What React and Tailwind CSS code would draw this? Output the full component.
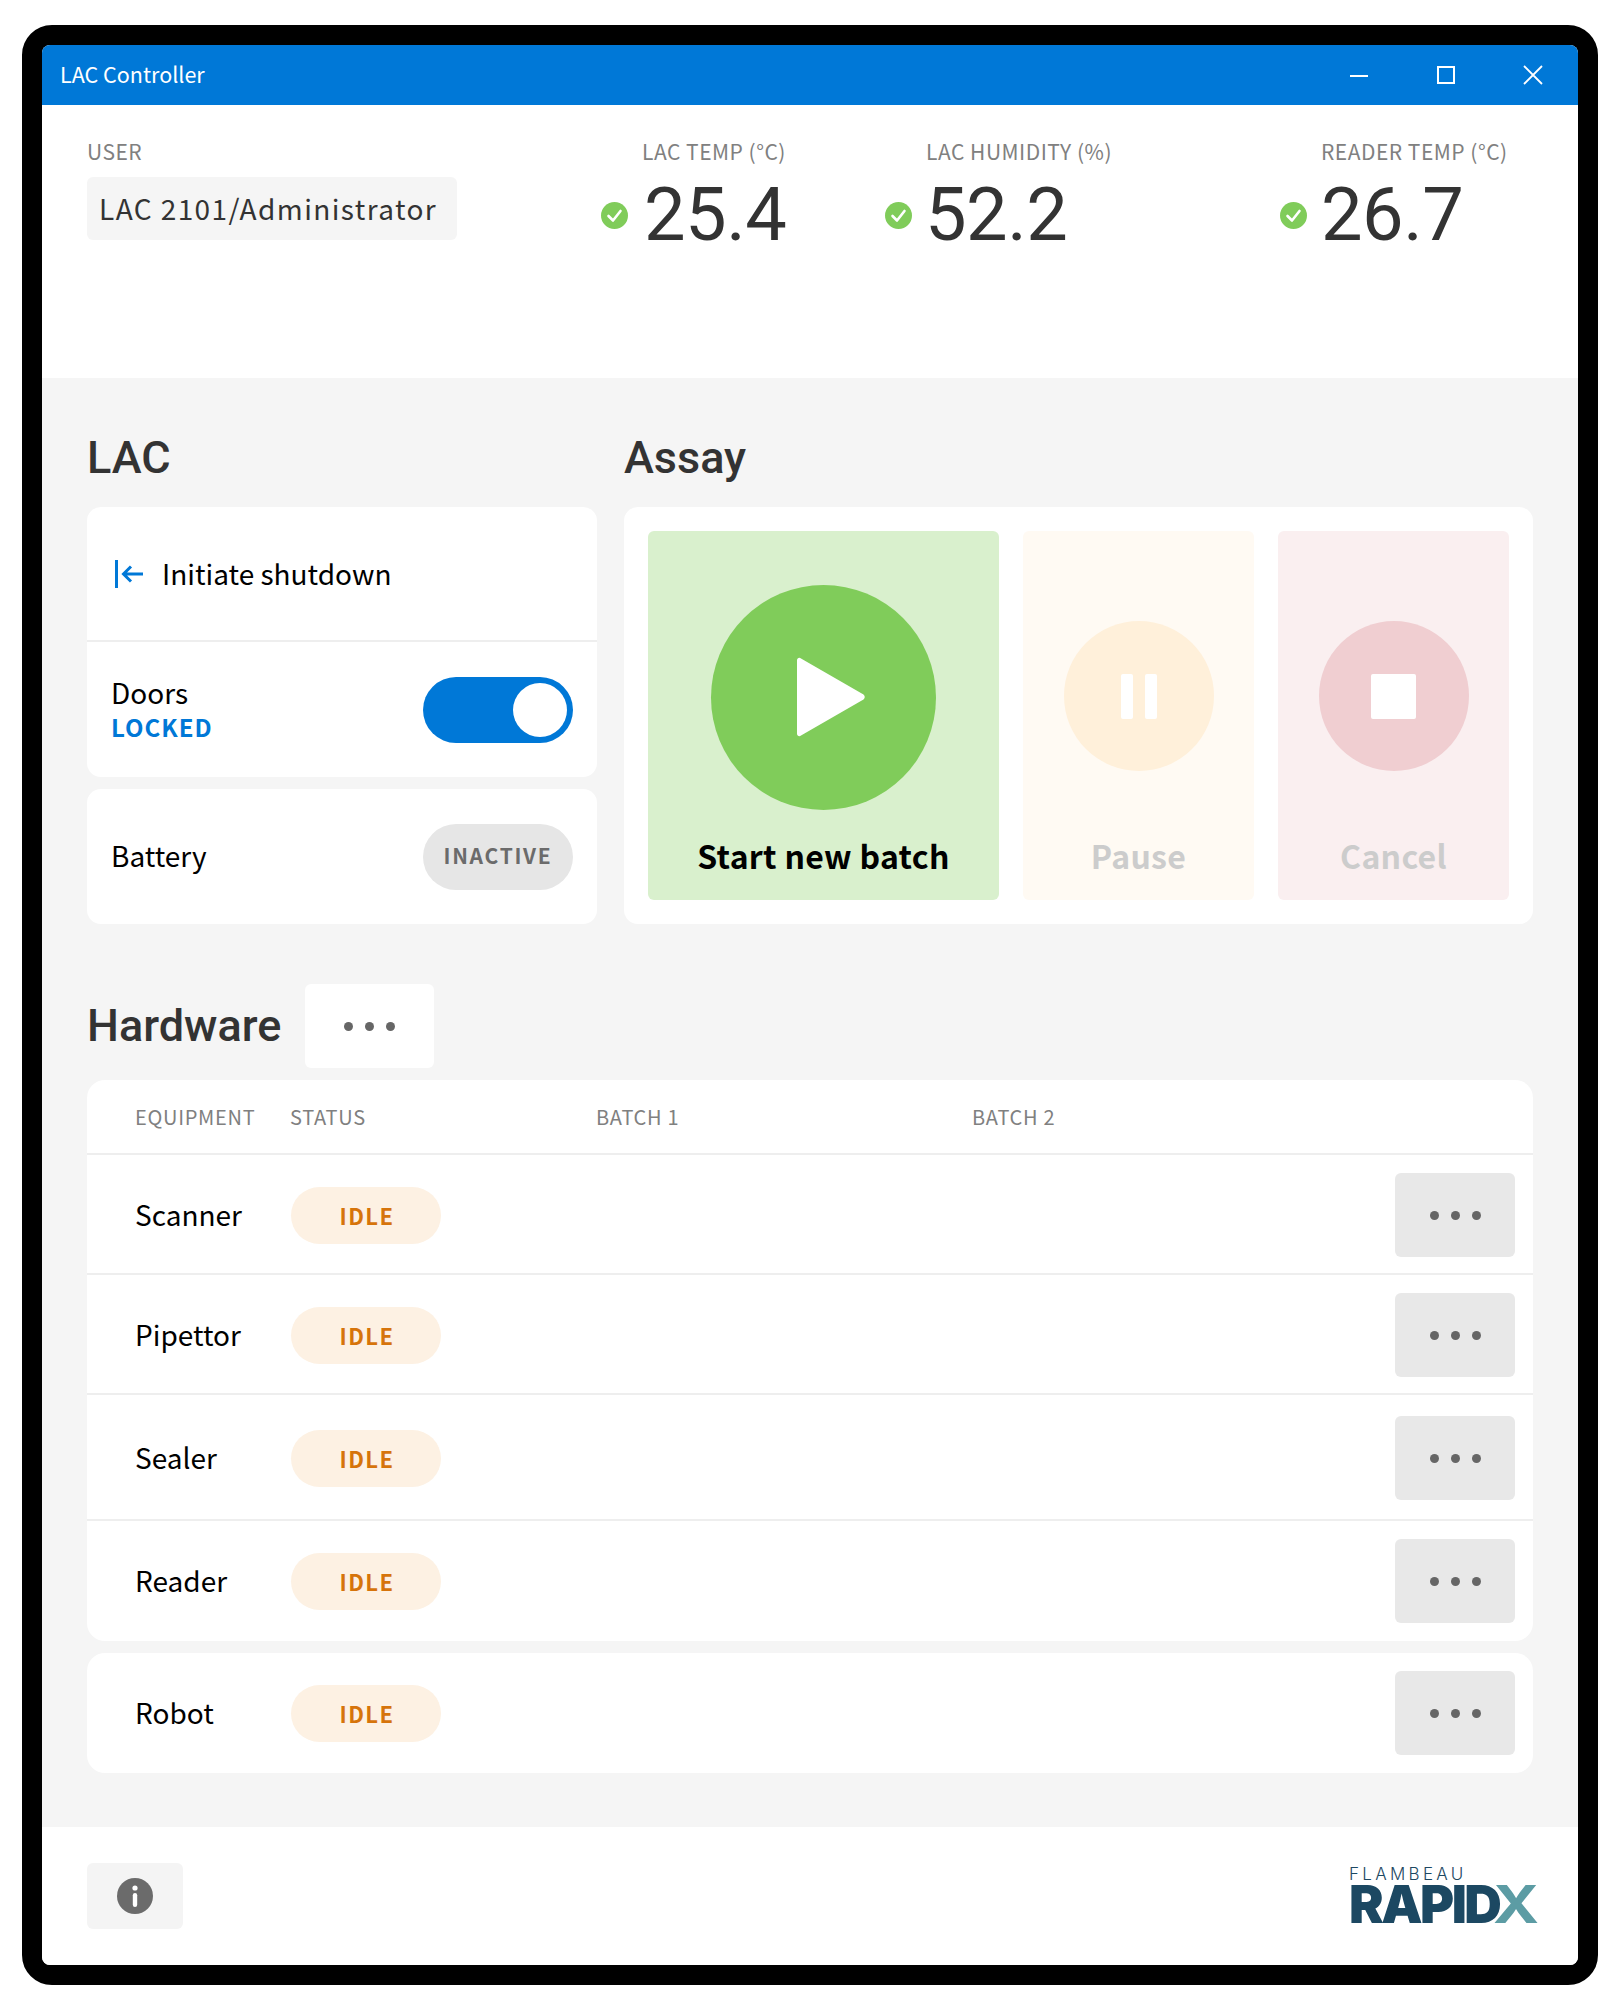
const sans = { fontFamily: '"Noto Sans CJK SC", "Noto Sans", sans-serif' };
const roboto = { fontFamily: 'Roboto, sans-serif' };

const CheckDot = () => (
    <svg width="27" height="27" viewBox="0 0 27 27" className="shrink-0">
        <circle cx="13.5" cy="13.5" r="13.5" fill="#80cc5a" />
        <path d="M7.500 14l4.500 4.500 7.500-9.500" fill="none" stroke="#fff" strokeWidth="2.600" strokeLinecap="round" strokeLinejoin="round" />
    </svg>
);

const Dots = () => (
    <div className="flex gap-[12px]">
        <span className="w-[9px] h-[9px] rounded-full bg-[#666666]" />
        <span className="w-[9px] h-[9px] rounded-full bg-[#666666]" />
        <span className="w-[9px] h-[9px] rounded-full bg-[#666666]" />
    </div>
);

const Stat = ({ label, value, className, gap = 'gap-[16px]' }) => (
    <div className={className}>
        <p className="pl-[41px] text-[21px] leading-[30px] tracking-[0.5px] text-[#808080] whitespace-nowrap">{label}</p>
        <div className={`flex items-center ${gap} mt-[9px]`}>
            <CheckDot />
            <span className="text-[74px] leading-[80px] tracking-[-0.5px] text-[#333333]" style={roboto}>{value}</span>
        </div>
    </div>
);

const Row = ({ name, className = 'h-[120px]' }) => (
    <div className={`flex items-center pl-[48px] pr-[18px] ${className}`}>
        <span className="w-[156px] -mt-[2px] text-[28px] text-black">{name}</span>
        <span className="w-[150px] h-[57px] rounded-full bg-[#fdf1e3] flex items-center justify-center pl-[2px] text-[22px] font-bold tracking-[1.5px] text-[#d6740b]">IDLE</span>
        <button className="ml-auto w-[120px] h-[84px] rounded-[6px] bg-[#e8e8e8] flex items-center justify-center"><Dots /></button>
    </div>
);

const Tile = ({ width, bg, circle, size, label, labelColor, children }) => (
    <div className={`${width} ${bg} rounded-[6px] flex flex-col items-center`}>
        <div className="h-[332px] shrink-0 flex items-center justify-center">
            <div className={`${size} ${circle} rounded-full flex items-center justify-center`}>{children}</div>
        </div>
        <span className={`-mt-[33px] text-[32px] font-bold tracking-[0.3px] leading-[50px] ${labelColor}`}>{label}</span>
    </div>
);

export default function App() {
    return (
        <div className="min-h-[2010px] bg-white pl-[22px] pt-[25px]" style={sans}>
            <div className="w-[1576px] h-[1960px] border-[20px] border-black rounded-[30px] bg-black">
                <div className="h-full rounded-[8px] overflow-hidden bg-white flex flex-col">
                    {/* Title bar */}
                    <div className="h-[60px] shrink-0 bg-[#0078d7] flex items-center pl-[18px] text-white">
                        <span className="text-[21.5px] leading-none -mt-[2px]">LAC Controller</span>
                        <div className="ml-auto flex items-center pr-[35px]">
                            <svg width="18" height="18" viewBox="0 0 18 18" fill="none" stroke="#fff" strokeWidth="2"><path d="M0 10h18" /></svg>
                            <svg width="18" height="18" viewBox="0 0 18 18" fill="none" stroke="#fff" strokeWidth="2" className="ml-[69px]"><rect x="1" y="1" width="16" height="16" /></svg>
                            <svg width="20" height="20" viewBox="0 0 20 20" fill="none" stroke="#fff" strokeWidth="1.800" className="ml-[68px]"><path d="M1 1l18 18M19 1L1 19" /></svg>
                        </div>
                    </div>

                    {/* Readouts */}
                    <div className="h-[273px] shrink-0 flex pl-[45px] pt-[31px]">
                        <div className="w-[514px]">
                            <p className="text-[21px] leading-[30px] tracking-[0.5px] text-[#808080]">USER</p>
                            <div className="mt-[11px] w-[370px] h-[63px] rounded-[6px] bg-[#f5f5f5] flex items-center pl-[12px] pb-[2px] text-[28px] tracking-[1.4px] text-[#333333] whitespace-nowrap">LAC 2101/Administrator</div>
                        </div>
                        <Stat label="LAC TEMP (°C)" value="25.4" className="w-[284px]" />
                        <Stat label="LAC HUMIDITY (%)" value="52.2" className="w-[395px]" gap="gap-[13px]" />
                        <Stat label="READER TEMP (°C)" value="26.7" gap="gap-[14px]" />
                    </div>

                    {/* Main */}
                    <div className="h-[1449px] shrink-0 bg-[#f5f5f5] px-[45px] pt-[49px]">
                        <div className="grid grid-cols-[510px_909px] gap-x-[27px]">
                            <h2 className="h-[60px] mb-[20px] flex items-center pt-[2px] text-[45px] font-medium text-[#333333]" style={roboto}>LAC</h2>
                            <h2 className="h-[60px] mb-[20px] flex items-center pt-[2px] text-[45px] font-medium text-[#333333]" style={roboto}>Assay</h2>

                            <div className="flex flex-col gap-[12px]">
                                <div className="h-[270px] rounded-[14px] bg-white flex flex-col">
                                    <div className="h-[135px] shrink-0 border-b-2 border-[#eeeeee] flex items-center pl-[28px] gap-[19px]">
                                        <svg width="28" height="28" viewBox="0 0 28 28" className="shrink-0" fill="none" stroke="#0078d7" strokeWidth="3">
                                            <path d="M1.500 0v28" />
                                            <path d="M28 14H9M16 6.500L8.500 14l7.500 7.500" />
                                        </svg>
                                        <span className="text-[28px] -mt-[2px] text-black">Initiate shutdown</span>
                                    </div>
                                    <div className="flex-1 flex items-center px-[24px]">
                                        <div>
                                            <p className="text-[28px] leading-[36px] -mt-[4px] text-black">Doors</p>
                                            <p className="text-[24px] leading-[30px] font-bold tracking-[1px] mt-[2px] text-[#0078d7]">LOCKED</p>
                                        </div>
                                        <div className="ml-auto w-[150px] h-[66px] rounded-full bg-[#0078d7] flex items-center justify-end pr-[6px]">
                                            <span className="w-[54px] h-[54px] rounded-full bg-white" />
                                        </div>
                                    </div>
                                </div>
                                <div className="h-[135px] rounded-[14px] bg-white flex items-center px-[24px]">
                                    <span className="text-[28px] -mt-[3px] text-black">Battery</span>
                                    <span className="ml-auto w-[150px] h-[66px] rounded-full bg-[#e6e6e6] flex items-center justify-center pb-[2px] text-[21px] font-bold tracking-[1.7px] text-[#6b6b6b]">INACTIVE</span>
                                </div>
                            </div>

                            <div className="h-[417px] rounded-[14px] bg-white p-[24px] flex gap-[24px]">
                                <Tile width="w-[351px]" bg="bg-[#d9f0cd]" circle="bg-[#80cc5a]" size="w-[225px] h-[225px]" label="Start new batch" labelColor="text-black">
                                    <svg width="70" height="80" viewBox="0 0 70 80" className="ml-[14px]">
                                        <path d="M1 3.500C1 1 3.500 0 5 1.500L67.500 37.500Q70 40 67.500 42.500L5 78.500C3.500 80 1 79 1 76.500Z" fill="#fff" />
                                    </svg>
                                </Tile>
                                <Tile width="w-[231px]" bg="bg-[#fffaf3]" circle="bg-[#fff0da] -mt-[2px]" size="w-[150px] h-[150px]" label="Pause" labelColor="text-[#cccccc]">
                                    <div className="flex gap-[12px]">
                                        <span className="w-[12px] h-[45px] rounded-[2px] bg-white" />
                                        <span className="w-[12px] h-[45px] rounded-[2px] bg-white" />
                                    </div>
                                </Tile>
                                <Tile width="w-[231px]" bg="bg-[#faeff0]" circle="bg-[#f0ced1] -mt-[2px]" size="w-[150px] h-[150px]" label="Cancel" labelColor="text-[#cccccc]">
                                    <span className="w-[45px] h-[45px] rounded-[2px] bg-white" />
                                </Tile>
                            </div>
                        </div>

                        {/* Hardware */}
                        <div className="mt-[60px] mb-[12px] h-[84px] flex items-center gap-[21px]">
                            <h2 className="w-[197px] text-[45px] font-medium text-[#333333]" style={roboto}>Hardware</h2>
                            <button className="w-[129px] h-[84px] rounded-[6px] bg-white flex items-center justify-center"><Dots /></button>
                        </div>
                        <div className="rounded-[18px] bg-white divide-y-2 divide-[#eeeeee]">
                            <div className="h-[75px] flex items-center pl-[48px] text-[20px] tracking-[0.7px] text-[#808080]">
                                <span className="w-[155px]">EQUIPMENT</span>
                                <span className="w-[306px]">STATUS</span>
                                <span className="w-[376px]">BATCH 1</span>
                                <span>BATCH 2</span>
                            </div>
                            <Row name="Scanner" className="h-[120px] pt-[2px]" />
                            <Row name="Pipettor" className="h-[120px] pt-[2px]" />
                            <Row name="Sealer" className="h-[126px] pt-[2px]" />
                            <Row name="Reader" />
                        </div>
                        <div className="mt-[12px] rounded-[18px] bg-white">
                            <Row name="Robot" />
                        </div>
                    </div>

                    {/* Footer */}
                    <div className="flex-1 flex items-center justify-between pl-[45px] pr-[37px] bg-white">
                        <button className="w-[96px] h-[66px] rounded-[6px] bg-[#f4f4f4] flex items-center justify-center">
                            <svg width="36" height="36" viewBox="0 0 36 36">
                                <circle cx="18" cy="18" r="18" fill="#6b6b6b" />
                                <circle cx="18" cy="10" r="2.600" fill="#fff" />
                                <rect x="15.800" y="15" width="4.400" height="14" rx="2.200" fill="#fff" />
                            </svg>
                        </button>
                        <div className="w-[192px] select-none" style={{ fontFamily: 'Inter, sans-serif' }}>
                            <p className="text-[17px] leading-[18px] font-light tracking-[3.300px] text-[#1c4862]">FLAMBEAU</p>
                            <p className="text-[52px] leading-[44px] font-black tracking-[-2.500px] text-[#1c4862] whitespace-nowrap">
                                <span className="relative z-10">RAPID</span>
                                <span className="inline-block -ml-[6px] origin-left scale-x-[1.2] font-bold text-[#5c9ca4]">X</span>
                            </p>
                        </div>
                    </div>
                </div>
            </div>
        </div>
    );
}
